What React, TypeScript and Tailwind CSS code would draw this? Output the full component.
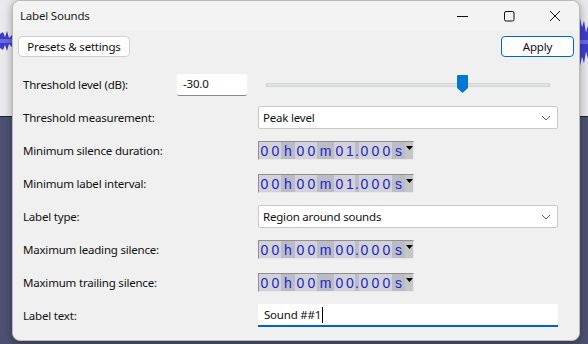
import React from 'react';

const font = { fontFamily: '"Noto Sans", "Open Sans", sans-serif' };

type Cell = { t: string; w: string; kind: 'd' | 'l' };

const timeCells = (secs: string): Cell[] => [
  { t: '0', w: 'w-[11px]', kind: 'd' },
  { t: '0', w: 'w-[11px]', kind: 'd' },
  { t: 'h', w: 'w-[14px]', kind: 'l' },
  { t: '0', w: 'w-[11px]', kind: 'd' },
  { t: '0', w: 'w-[11px]', kind: 'd' },
  { t: 'm', w: 'w-[17px]', kind: 'l' },
  { t: '0', w: 'w-[11px]', kind: 'd' },
  { t: secs, w: 'w-[10px]', kind: 'd' },
  { t: '.', w: 'w-[4px]', kind: 'l' },
  { t: '0', w: 'w-[11px]', kind: 'd' },
  { t: '0', w: 'w-[11px]', kind: 'd' },
  { t: '0', w: 'w-[11px]', kind: 'd' },
  { t: 's', w: 'w-[13px]', kind: 'l' },
];

function TimeControl({ secs }: { secs: string }) {
  return (
    <div className="flex h-[19px] w-[156px] border-t border-l border-[#8f8f8f] border-b border-r border-b-[#e8e8e8] border-r-[#e8e8e8] bg-[#c4c6ce]">
      {timeCells(secs).map((c, i) => (
        <div
          key={i}
          className={`${c.w} flex items-center justify-center h-full pt-[1px] text-[14px] leading-none text-[#1e1ec8] ${
            c.kind === 'd' ? 'bg-[#d2d3d8]' : 'bg-[#babdc8]'
          }`}
          style={{ fontFamily: '"Liberation Sans", Arial, sans-serif' }}
        >
          {c.t}
        </div>
      ))}
      <div className="w-[8px] h-full bg-[#c6c6c6] flex justify-center pt-[4px]">
        <svg width="7" height="4" viewBox="0 0 7 4">
          <polygon points="0,0 7,0 3.5,4" fill="#000" />
        </svg>
      </div>
    </div>
  );
}

function Select({ value }: { value: string }) {
  return (
    <div className="flex items-center justify-between w-[300px] h-[23px] bg-white border border-[#c8c8c8] rounded-[2px] pl-[4px] pr-[6px] text-[11.5px] tracking-[-0.2px] text-[#111]">
      <span>{value}</span>
      <svg width="10" height="6" viewBox="0 0 10 6">
        <polyline points="1,1 5,5 9,1" fill="none" stroke="#606060" strokeWidth="1" />
      </svg>
    </div>
  );
}

function Row({ label, children }: { label: string; children: React.ReactNode }) {
  return (
    <div className="flex items-center h-[33px]">
      <div className="w-[235px] text-[11.5px] tracking-[-0.2px] text-[#111]">{label}</div>
      {children}
    </div>
  );
}

function Waveform({ h, mid, amp }: { h: number; mid: number; amp: number }) {
  return (
    <svg width="8" height={h} viewBox={`0 0 8 ${h}`} className="block">
      <polygon
        points={`0,${mid - amp} 2,${mid - amp * 0.6} 4,${mid - amp * 0.9} 6,${mid - amp * 0.4} 8,${mid - amp * 0.7} 8,${mid + amp * 0.7} 6,${mid + amp * 0.4} 4,${mid + amp * 0.9} 2,${mid + amp * 0.6} 0,${mid + amp}`}
        fill="#3d3dcc"
      />
      <rect x="0" y={mid - 2} width="8" height="4" fill="#6a6ae0" />
    </svg>
  );
}

export default function App() {
  return (
    <div className="relative w-[588px] h-[344px] overflow-hidden bg-[#4d5070]" style={font}>
      {/* desktop behind the dialog */}
      <div className="h-[117px] bg-[#e9e9ee] border-b border-[#222] flex justify-between">
        <div className="w-[12px] pt-[30px]">
          <svg width="12" height="22" viewBox="0 0 12 22" className="block">
            <polygon points="0,4 3,2 5,7 7,1 9,8 12,5 12,17 9,14 7,21 5,15 3,20 0,18" fill="#3d3dcc" />
            <rect x="0" y="9" width="12" height="4" fill="#6a6ae0" />
          </svg>
        </div>
        <div className="w-[8px] pt-[16px]">
          <Waveform h={52} mid={26} amp={24} />
        </div>
      </div>

      {/* dialog window */}
      <div className="absolute left-[12px] top-0 w-[568px] h-[341px] bg-[#f0f0f0] rounded-[8px] border border-[#b9b9b9] shadow-[0_2px_8px_rgba(0,0,0,0.35)] overflow-hidden">
        {/* title bar */}
        <div className="flex items-center h-[30px] bg-[#f3f3f3]">
          <div className="pl-[7px] text-[11.5px] tracking-[-0.2px] text-[#1a1a1a] flex-1">Label Sounds</div>
          <div className="flex items-center h-full pr-[1px]">
            <div className="w-[46px] flex justify-center">
              <svg width="12" height="12" viewBox="0 0 12 12">
                <line x1="0" y1="6.5" x2="11" y2="6.5" stroke="#111" strokeWidth="1" />
              </svg>
            </div>
            <div className="w-[46px] flex justify-center">
              <svg width="12" height="12" viewBox="0 0 12 12">
                <rect x="1.5" y="1.5" width="9.5" height="9.5" rx="1.5" fill="none" stroke="#111" strokeWidth="1" />
              </svg>
            </div>
            <div className="w-[46px] flex justify-center">
              <svg width="12" height="12" viewBox="0 0 12 12">
                <path d="M1,1 L11,11 M11,1 L1,11" stroke="#111" strokeWidth="1" />
              </svg>
            </div>
          </div>
        </div>

        {/* body */}
        <div className="pt-[5px] px-[5px]">
          <div className="flex justify-between items-center h-[21px]">
            <button className="h-[21px] w-[112px] bg-[#fdfdfd] border border-[#d0d0d0] rounded-[4px] text-[11.5px] tracking-[-0.2px] text-[#111]">
              Presets &amp; settings
            </button>
            <button className="h-[21px] w-[73px] bg-[#fdfdfd] border-[1.5px] border-[#0067c0] rounded-[4px] text-[11.5px] tracking-[-0.2px] text-[#111]">
              Apply
            </button>
          </div>

          <div className="mt-[11px] pl-[5px]">
            <div className="flex items-center h-[33px]">
              <div className="w-[154px] text-[11.5px] tracking-[-0.2px] text-[#111]">Threshold level (dB):</div>
              <div className="w-[70px] h-[22px] bg-white border-b border-[#8a8a8a] rounded-[2px] flex items-center pl-[6px] text-[11.5px] tracking-[-0.2px] text-[#111]">
                -30.0
              </div>
              <div className="relative ml-[19px] w-[284px] h-[20px] flex items-center">
                <div className="w-full h-[4px] bg-[#e2e4e4] border border-[#cfd3d3]" />
                <svg className="absolute left-[191px] top-[0px]" width="11" height="18" viewBox="0 0 11 18">
                  <path d="M0,1 Q0,0 1,0 L10,0 Q11,0 11,1 L11,13 L5.5,18 L0,13 Z" fill="#0078d4" />
                </svg>
              </div>
            </div>
            <Row label="Threshold measurement:">
              <Select value="Peak level" />
            </Row>
            <Row label="Minimum silence duration:">
              <TimeControl secs="1" />
            </Row>
            <Row label="Minimum label interval:">
              <TimeControl secs="1" />
            </Row>
            <Row label="Label type:">
              <Select value="Region around sounds" />
            </Row>
            <Row label="Maximum leading silence:">
              <TimeControl secs="0" />
            </Row>
            <Row label="Maximum trailing silence:">
              <TimeControl secs="0" />
            </Row>
            <Row label="Label text:">
              <div className="w-[300px] h-[23px] bg-white border-b-2 border-[#0067c0] rounded-t-[2px] flex items-center pl-[6px] text-[11.5px] tracking-[-0.2px] text-[#111]">
                Sound ##1
                <span className="inline-block w-[1px] h-[16px] bg-black ml-[1px]" />
              </div>
            </Row>
          </div>
        </div>
      </div>
    </div>
  );
}
